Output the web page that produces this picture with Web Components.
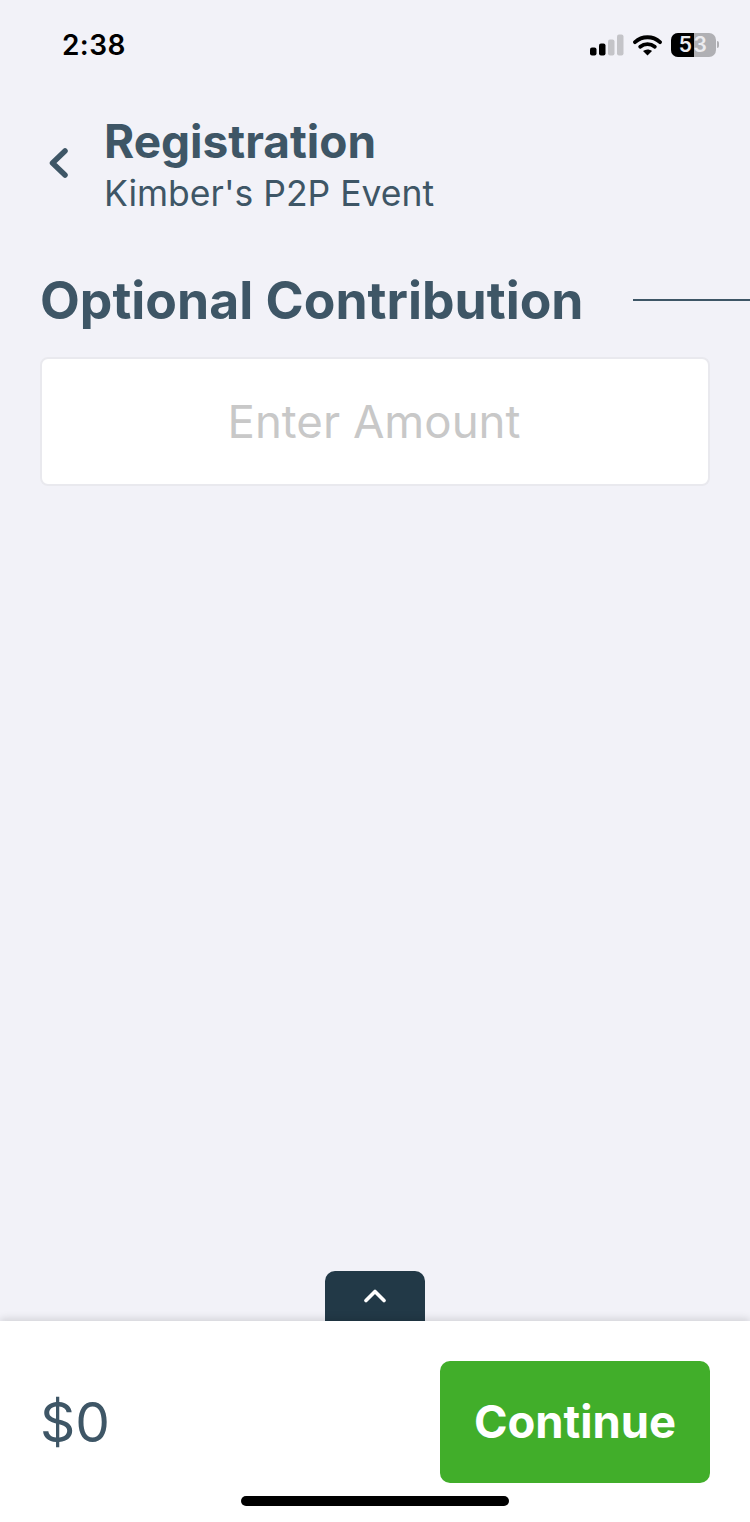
<!DOCTYPE html>
<html lang="en"><head><meta charset="utf-8"><title>Registration</title>
<style>
html,body{margin:0;padding:0}
body{width:750px;height:1522px;overflow:hidden;background:#f2f2f8;font-family:Inter,"Liberation Sans",sans-serif;color:#3e5666}
app-screen{height:1522px}
</style></head><body>
<app-screen>
  <status-bar time="2:38" battery="53"></status-bar>
  <nav-header title="Registration" subtitle="Kimber's P2P Event"></nav-header>
  <section-heading>Optional Contribution</section-heading>
  <amount-field placeholder="Enter Amount"></amount-field>
  <checkout-footer total="$0" action="Continue"></checkout-footer>
</app-screen>
<script>
function def(name, css, html){
  customElements.define(name, class extends HTMLElement{
    connectedCallback(){
      if(this.shadowRoot) return;
      const r=this.attachShadow({mode:'open'});
      const a=n=>(this.getAttribute(n)||'').replace(/&/g,'&amp;');
      r.innerHTML='<style>'+css+'</style>'+html(a);
    }
  });
}
def('app-screen',`:host{display:flex;flex-direction:column;width:750px}`,()=>`<slot></slot>`);
def('status-bar',`
:host{display:flex;align-items:center;justify-content:space-between;box-sizing:border-box;height:90px;padding:0 31px 0 62px;color:#000}
.t{font:600 28px/1 Inter,sans-serif;letter-spacing:.4px}
.r{display:flex;align-items:center;gap:9px;margin-top:-1px}
.batt{position:relative;width:45px;height:24px;border-radius:7px;background:#b0b0b4;overflow:hidden;font:600 21px/24px Inter,sans-serif;color:#ececf0;text-align:center}
.batt i{position:absolute;left:0;top:0;bottom:0;width:23px;background:#000}
.batt span{position:relative;letter-spacing:1.500px}
.wrap{display:flex;align-items:center;gap:1px}
.nub{width:2px;height:7px;background:#b0b0b4;border-radius:0 2px 2px 0}
`,a=>`<div class="t">${a('time')}</div><div class="r">
<svg width="34" height="22" viewBox="0 0 34 22"><rect x="0" y="13.500" width="6.500" height="8" rx="2" fill="#000"/><rect x="9" y="9.500" width="6.500" height="12" rx="2" fill="#000"/><rect x="18" y="5.500" width="6.500" height="16" rx="2" fill="#c4c4c8"/><rect x="27" y="0.500" width="6.500" height="21" rx="2" fill="#c4c4c8"/></svg>
<svg width="29" height="22" viewBox="0 0 29 22"><path d="M2 8.200C9.200 1.600 19.800 1.600 27 8.200" fill="none" stroke="#000" stroke-width="3.800" stroke-linecap="round"/><path d="M7.200 12.800C11.500 9.200 17.500 9.200 21.800 12.800" fill="none" stroke="#000" stroke-width="3.800" stroke-linecap="round"/><path d="M14.500 21.500L10 17C12.800 15 16.200 15 19 17Z" fill="#000"/></svg>
<div class="wrap"><div class="batt"><i></i><span>${a('battery')}</span></div><div class="nub"></div></div></div>`);
def('nav-header',`
:host{display:flex;align-items:center;box-sizing:border-box;height:130px;padding:19px 0 0 48px;color:#3e5666}
svg{width:21px;height:32px;margin-right:36px;margin-top:-3px;flex:none}
.c{display:flex;flex-direction:column;margin-left:-1px;gap:4px}
.a{font:700 46px/54px Inter,sans-serif}
.b{font:400 35.500px/44px Inter,sans-serif}
`,a=>`<svg viewBox="0 0 21 32"><path d="M17 4L4.500 16 17 28" fill="none" stroke="#3e5666" stroke-width="5.500" stroke-linecap="round" stroke-linejoin="round"/></svg><div class="c"><div class="a">${a('title')}</div><div class="b">${a('subtitle')}</div></div>`);
def('section-heading',`
:host{display:flex;align-items:center;box-sizing:border-box;height:80px;margin-top:40px;padding-left:40px;color:#3e5666}
h2{margin:0;font:700 51.700px/80px Inter,sans-serif;white-space:nowrap}
i{flex:1;height:2px;background:#3e5666;margin-left:49px}
`,()=>`<h2><slot></slot></h2><i></i>`);
def('amount-field',`
:host{display:flex;align-items:center;justify-content:center;box-sizing:border-box;height:129px;margin:17px 40px 0 40px;padding-right:2px;background:#fff;border:2px solid #e9e9ee;border-radius:8px;font:400 45.600px/1 Inter,sans-serif;color:#c8c8c8}
`,a=>`<div>${a('placeholder')}</div>`);
def('checkout-footer',`
:host{display:flex;flex-direction:column;align-items:center;margin-top:auto}
.tab{width:100px;height:50px;background:#223947;border-radius:10px 10px 0 0;display:flex;justify-content:center;padding-top:16px;box-sizing:border-box}
.panel{align-self:stretch;height:201px;box-sizing:border-box;background:#fff;box-shadow:0 -2px 8px rgba(0,0,0,.14);padding:40px 40px 0 40px;display:flex;flex-direction:column;position:relative}
.row{display:flex;align-items:center;justify-content:space-between;height:122px}
.tot{font:400 55px/1 Inter,sans-serif;color:#3e5666}
.btn{width:270px;height:122px;border-radius:10px;background:#41ae2a;color:#fff;font:700 45.400px/1 Inter,sans-serif;display:flex;align-items:center;justify-content:center}
.home{align-self:center;width:268px;height:10px;border-radius:5px;background:#000;margin-top:13px}
`,a=>`<div class="tab"><svg width="24" height="16" viewBox="0 0 24 16"><path d="M3 13.500L12 4.500 21 13.500" fill="none" stroke="#fff" stroke-width="3.600" stroke-linecap="round" stroke-linejoin="round"/></svg></div><div class="panel"><div class="row"><div class="tot">${a('total')}</div><div class="btn">${a('action')}</div></div><div class="home"></div></div>`);
</script>
</body></html>
